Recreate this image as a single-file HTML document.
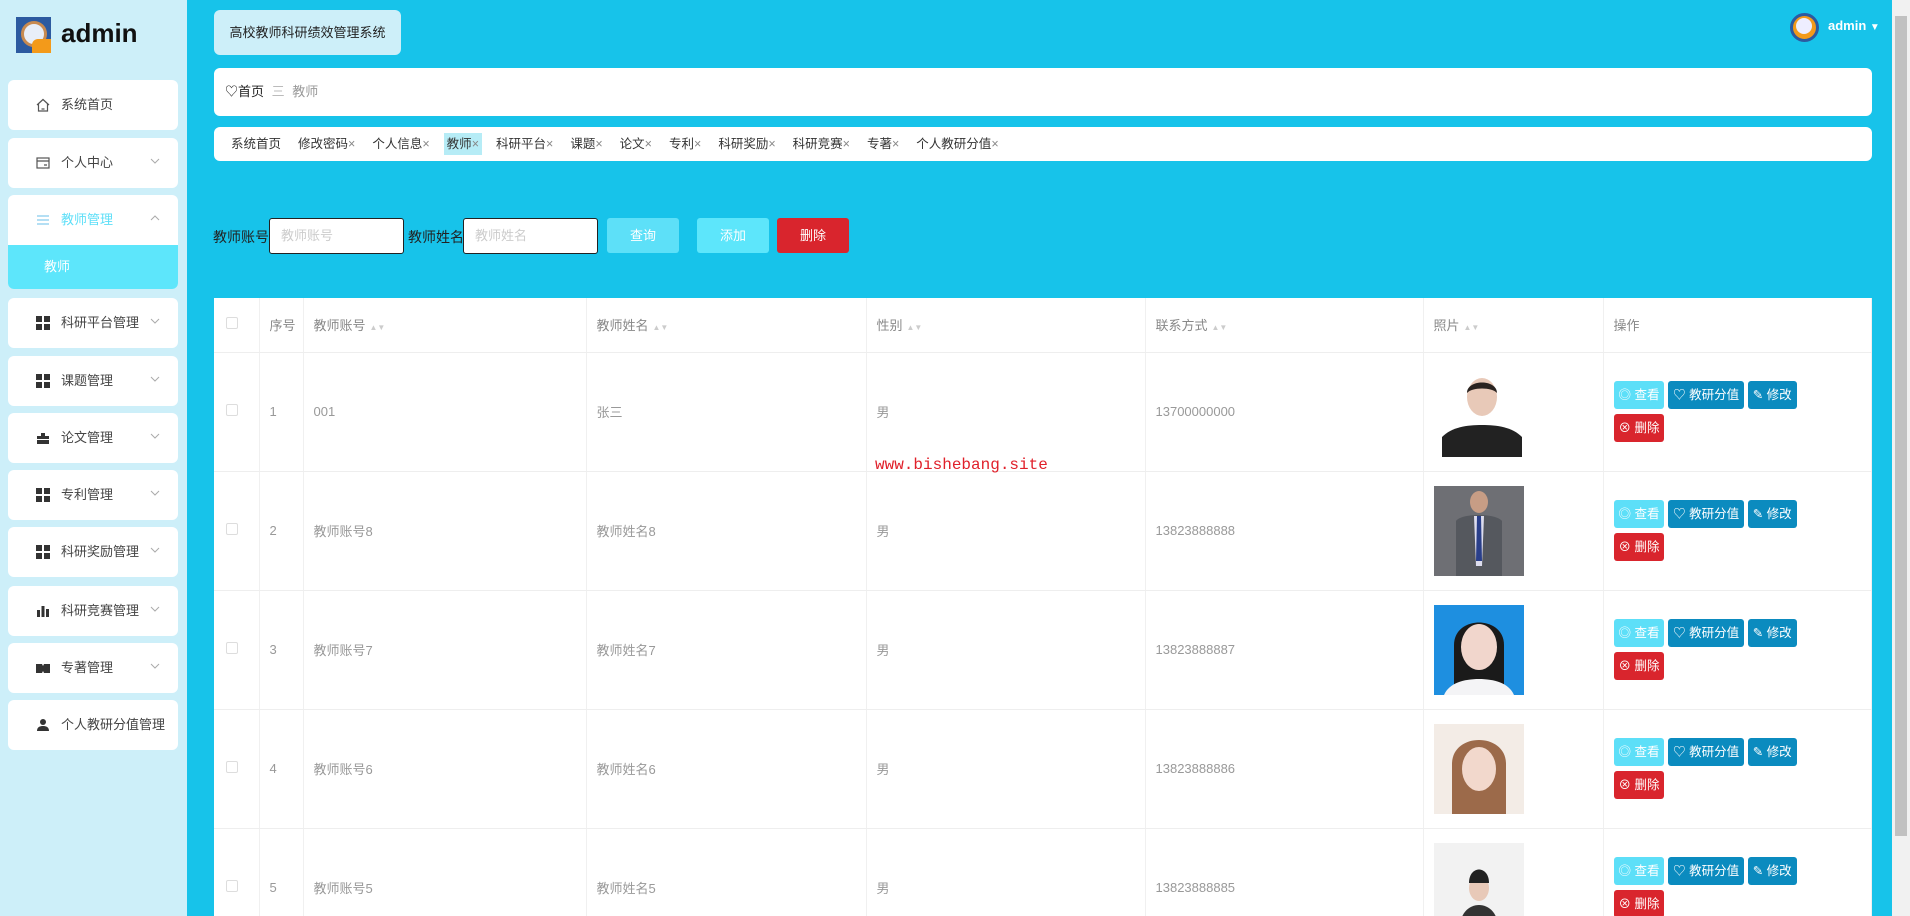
<!DOCTYPE html>
<html><head><meta charset="utf-8"><style>
*{box-sizing:border-box;margin:0;padding:0}
html,body{width:1910px;height:916px;overflow:hidden}
body{background:#17c3ea;font-family:"Liberation Sans","Noto Sans CJK SC",sans-serif;position:relative;color:#333}
.side{position:absolute;left:0;top:0;width:187px;height:916px;background:#cdeff9}
.logo{position:absolute;left:16px;top:17px;width:35px;height:36px;background:#2c5aa0;overflow:hidden}
.logo i{position:absolute;left:5px;top:4px;width:26px;height:26px;border-radius:50%;background:#e8eef8;border:3px solid #c88a50}
.logo b{position:absolute;left:16px;top:22px;width:20px;height:16px;background:#f39a1a;border-radius:6px 0 0 0}
.brand{position:absolute;left:61px;top:18px;font-size:26px;font-weight:bold;color:#111}
.mi{position:absolute;left:8px;width:170px;height:50px;background:#fff;border-radius:6px;font-size:13px;color:#444;line-height:50px;padding-left:53px;white-space:nowrap}
.mi .ic{position:absolute;left:28px;top:18px;width:14px;height:14px}
.mi .ar{position:absolute;right:18px;top:20px;width:10px;height:6px}
.grid{background:linear-gradient(#333,#333) 0 0/6px 6px no-repeat,linear-gradient(#333,#333) 8px 0/6px 6px no-repeat,linear-gradient(#333,#333) 0 8px/6px 6px no-repeat,linear-gradient(#333,#333) 8px 8px/6px 6px no-repeat}
.box{position:absolute;background:#fff;border-radius:6px}
.tag{display:inline-block;font-size:12.5px;color:#333;margin-right:11px;padding:0 3px;line-height:22px}
.tag s{text-decoration:none;color:#888}
.inp{position:absolute;top:218px;height:36px;width:135px;border:1px solid #222;border-radius:3px;background:#fff;font-size:13px;color:#ccc;line-height:34px;padding-left:11px}
.lbl{position:absolute;top:227px;font-size:14px;color:#222}
.btn{position:absolute;top:218px;height:35px;width:72px;border-radius:3px;color:#fff;font-size:13px;text-align:center;line-height:35px}
table{border-collapse:collapse;position:absolute;left:214px;top:298px;width:1658px;background:#fff;font-size:13px;color:#999;table-layout:fixed}
td,th{border-right:1px solid #f0f0f0;border-bottom:1px solid #eee;text-align:left;font-weight:normal;padding-left:10px}
th{height:54px;color:#888;font-size:13px}
td{height:119px;overflow:hidden}
.so{color:#ccc;font-size:8px;margin-left:4px}
.cb{display:inline-block;width:12px;height:12px;border:1px solid #ddd;border-radius:2px}
.ob{display:inline-block;height:28px;line-height:28px;border-radius:3px;color:#fff;font-size:12.5px;padding:0 5px;margin:2px 0 3px 0;vertical-align:top;white-space:nowrap}
.v{background:#5ddff8}.k{background:#0b8bbf}.m{background:#0b8bbf}.d{background:#d9252d}
.ph{width:90px;height:90px;display:block}
</style></head><body>
<div class="side">
 <div class="logo"><i></i><b></b></div>
 <div class="brand">admin</div>
 <div class="mi" style="top:80px"><svg class="ic" viewBox="0 0 14 14" fill="none" stroke="#555" stroke-width="1.2"><path d="M1 7L7 1.5 13 7M2.5 6V13H11.5V6M5.5 11h3"/></svg>系统首页</div>
 <div class="mi" style="top:138px"><svg class="ic" viewBox="0 0 14 14" fill="none" stroke="#555" stroke-width="1.2"><rect x="1" y="2" width="12" height="10"/><path d="M1 5h12M8 9h3"/></svg>个人中心<svg class="ar" viewBox="0 0 10 6" fill="none" stroke="#aaa"><path d="M1 1l4 4 4-4"/></svg></div>
 <div class="mi" style="top:195px;height:94px;color:#5ddff8;background:#fff"><svg class="ic" viewBox="0 0 14 14" fill="none" stroke="#8ce" stroke-width="1.2"><path d="M1 3h12M1 7h12M1 11h12"/></svg>教师管理<svg class="ar" viewBox="0 0 10 6" fill="none" stroke="#aaa"><path d="M1 5l4-4 4 4"/></svg>
  <div style="position:absolute;left:0;top:50px;width:170px;height:44px;background:#5de6fb;border-radius:0 0 6px 6px;color:#fff;font-size:13px;line-height:44px;padding-left:36px">教师</div></div>
 <div class="mi" style="top:298px"><span class="ic grid"></span>科研平台管理<svg class="ar" viewBox="0 0 10 6" fill="none" stroke="#aaa"><path d="M1 1l4 4 4-4"/></svg></div>
 <div class="mi" style="top:356px"><span class="ic grid"></span>课题管理<svg class="ar" viewBox="0 0 10 6" fill="none" stroke="#aaa"><path d="M1 1l4 4 4-4"/></svg></div>
 <div class="mi" style="top:413px"><svg class="ic" viewBox="0 0 14 14"><path d="M1 5h12v8H1zM5 2h4v3H5z" fill="#333"/><path d="M1 8.5h12" stroke="#fff"/></svg>论文管理<svg class="ar" viewBox="0 0 10 6" fill="none" stroke="#aaa"><path d="M1 1l4 4 4-4"/></svg></div>
 <div class="mi" style="top:470px"><span class="ic grid"></span>专利管理<svg class="ar" viewBox="0 0 10 6" fill="none" stroke="#aaa"><path d="M1 1l4 4 4-4"/></svg></div>
 <div class="mi" style="top:527px"><span class="ic grid"></span>科研奖励管理<svg class="ar" viewBox="0 0 10 6" fill="none" stroke="#aaa"><path d="M1 1l4 4 4-4"/></svg></div>
 <div class="mi" style="top:586px"><svg class="ic" viewBox="0 0 14 14" fill="#333"><rect x="1" y="6" width="3" height="7"/><rect x="5.5" y="2" width="3" height="11"/><rect x="10" y="5" width="3" height="8"/></svg>科研竞赛管理<svg class="ar" viewBox="0 0 10 6" fill="none" stroke="#aaa"><path d="M1 1l4 4 4-4"/></svg></div>
 <div class="mi" style="top:643px"><svg class="ic" viewBox="0 0 14 14" fill="#333"><path d="M0 3h6l1 2 1-2h6v9H8l-1-2-1 2H0z"/></svg>专著管理<svg class="ar" viewBox="0 0 10 6" fill="none" stroke="#aaa"><path d="M1 1l4 4 4-4"/></svg></div>
 <div class="mi" style="top:700px"><svg class="ic" viewBox="0 0 14 14" fill="#333"><circle cx="7" cy="4" r="3"/><path d="M1 13c0-4 3-5 6-5s6 1 6 5z"/></svg>个人教研分值管理</div>
</div>
<div style="position:absolute;left:1892px;top:0;width:18px;height:916px;background:#f1f1f1"><div style="position:absolute;left:3px;top:16px;width:12px;height:820px;background:#c1c1c1"></div></div>
<div class="box" style="left:214px;top:10px;width:187px;height:45px;background:#cdeff9;font-size:13px;line-height:45px;text-align:center;color:#222">高校教师科研绩效管理系统</div>
<div style="position:absolute;left:1790px;top:13px;width:29px;height:29px;border-radius:50%;background:#f39a1a;border:3px solid #2c5aa0"><div style="position:absolute;left:3px;top:2px;width:16px;height:16px;border-radius:50%;background:#eef"></div></div>
<div style="position:absolute;left:1828px;top:18px;color:#fff;font-size:13px;font-weight:bold">admin <span style="font-size:10px">▼</span></div>
<div class="box" style="left:214px;top:68px;width:1658px;height:48px;font-size:13px;line-height:48px;padding-left:11px;color:#222">♡首页 <span style="color:#bbb;margin:0 4px">三</span> <span style="color:#999">教师</span></div>
<div class="box" style="left:214px;top:127px;width:1658px;height:34px;padding:6px 0 0 14px;white-space:nowrap">
<span class="tag">系统首页</span><span class="tag">修改密码<s>×</s></span><span class="tag">个人信息<s>×</s></span><span class="tag" style="background:#b6ecf6">教师<s>×</s></span><span class="tag">科研平台<s>×</s></span><span class="tag">课题<s>×</s></span><span class="tag">论文<s>×</s></span><span class="tag">专利<s>×</s></span><span class="tag">科研奖励<s>×</s></span><span class="tag">科研竞赛<s>×</s></span><span class="tag">专著<s>×</s></span><span class="tag">个人教研分值<s>×</s></span></div>
<span class="lbl" style="left:213px">教师账号</span><div class="inp" style="left:269px">教师账号</div>
<span class="lbl" style="left:408px">教师姓名</span><div class="inp" style="left:463px">教师姓名</div>
<div class="btn" style="left:607px;background:#5de0f8">查询</div>
<div class="btn" style="left:697px;background:#5de6fb">添加</div>
<div class="btn" style="left:777px;background:#d9252d">删除</div>
<div class="box" style="left:214px;top:298px;width:1658px;height:630px"></div>
<table>
<colgroup><col style="width:45px"><col style="width:44px"><col style="width:283px"><col style="width:280px"><col style="width:279px"><col style="width:278px"><col style="width:180px"><col></colgroup>
<tr><th style="padding-left:12px"><span class="cb"></span></th><th>序号</th><th>教师账号<span class="so">▲▼</span></th><th>教师姓名<span class="so">▲▼</span></th><th>性别<span class="so">▲▼</span></th><th>联系方式<span class="so">▲▼</span></th><th>照片<span class="so">▲▼</span></th><th>操作</th></tr>
<tr><td style="padding-left:12px"><span class="cb"></span></td><td>1</td><td>001</td><td>张三</td><td>男</td><td>13700000000</td><td><svg class="ph" viewBox="0 0 90 90" style="margin-left:3px"><rect width="90" height="90" fill="#fff"/><path d="M5 90V70c10-10 25-12 40-12s30 2 40 12v20z" fill="#222"/><ellipse cx="45" cy="30" rx="15" ry="19" fill="#e8c9b8"/><path d="M30 26c0-14 30-14 30 0-5-6-25-6-30 0z" fill="#2a2320"/></svg></td><td><span class="ob v">◎ 查看</span> <span class="ob k">♡ 教研分值</span> <span class="ob m">✎ 修改</span><br><span class="ob d">⊗ 删除</span></td></tr>
<tr><td style="padding-left:12px"><span class="cb"></span></td><td>2</td><td>教师账号8</td><td>教师姓名8</td><td>男</td><td>13823888888</td><td><svg class="ph" viewBox="0 0 90 90"><rect width="90" height="90" fill="#6e6f74"/><path d="M22 90V35c5-8 40-8 46 0v55z" fill="#55585e"/><path d="M40 30h10l-2 50h-6z" fill="#dde"/><path d="M43 30h4l1 45h-6z" fill="#2a3f8a"/><ellipse cx="45" cy="16" rx="9" ry="11" fill="#c79d85"/></svg></td><td><span class="ob v">◎ 查看</span> <span class="ob k">♡ 教研分值</span> <span class="ob m">✎ 修改</span><br><span class="ob d">⊗ 删除</span></td></tr>
<tr><td style="padding-left:12px"><span class="cb"></span></td><td>3</td><td>教师账号7</td><td>教师姓名7</td><td>男</td><td>13823888887</td><td><svg class="ph" viewBox="0 0 90 90"><rect width="90" height="90" fill="#1e8fe0"/><path d="M20 90V40c0-30 50-30 50 0v50z" fill="#1a1a1a"/><ellipse cx="45" cy="42" rx="18" ry="23" fill="#f1d6cc"/><path d="M10 90c5-12 20-16 35-16s30 4 35 16z" fill="#f4f4f6"/></svg></td><td><span class="ob v">◎ 查看</span> <span class="ob k">♡ 教研分值</span> <span class="ob m">✎ 修改</span><br><span class="ob d">⊗ 删除</span></td></tr>
<tr><td style="padding-left:12px"><span class="cb"></span></td><td>4</td><td>教师账号6</td><td>教师姓名6</td><td>男</td><td>13823888886</td><td><svg class="ph" viewBox="0 0 90 90"><rect width="90" height="90" fill="#f3ece6"/><path d="M18 90V40c0-32 54-32 54 0v50z" fill="#9c6a4a"/><ellipse cx="45" cy="45" rx="17" ry="22" fill="#f2d8cc"/></svg></td><td><span class="ob v">◎ 查看</span> <span class="ob k">♡ 教研分值</span> <span class="ob m">✎ 修改</span><br><span class="ob d">⊗ 删除</span></td></tr>
<tr><td style="padding-left:12px"><span class="cb"></span></td><td>5</td><td>教师账号5</td><td>教师姓名5</td><td>男</td><td>13823888885</td><td><svg class="ph" viewBox="0 0 90 90"><rect width="90" height="90" fill="#f2f2f2"/><ellipse cx="45" cy="45" rx="10" ry="13" fill="#e8c9b8"/><path d="M35 40c0-18 20-18 20 0z" fill="#222"/><path d="M25 90c0-20 10-28 20-28s20 8 20 28z" fill="#333"/></svg></td><td><span class="ob v">◎ 查看</span> <span class="ob k">♡ 教研分值</span> <span class="ob m">✎ 修改</span><br><span class="ob d">⊗ 删除</span></td></tr>
</table>
<div style="position:absolute;left:875px;top:456px;color:#e0202a;font-family:'Liberation Mono',monospace;font-size:16px">www.bishebang.site</div>
</body></html>
